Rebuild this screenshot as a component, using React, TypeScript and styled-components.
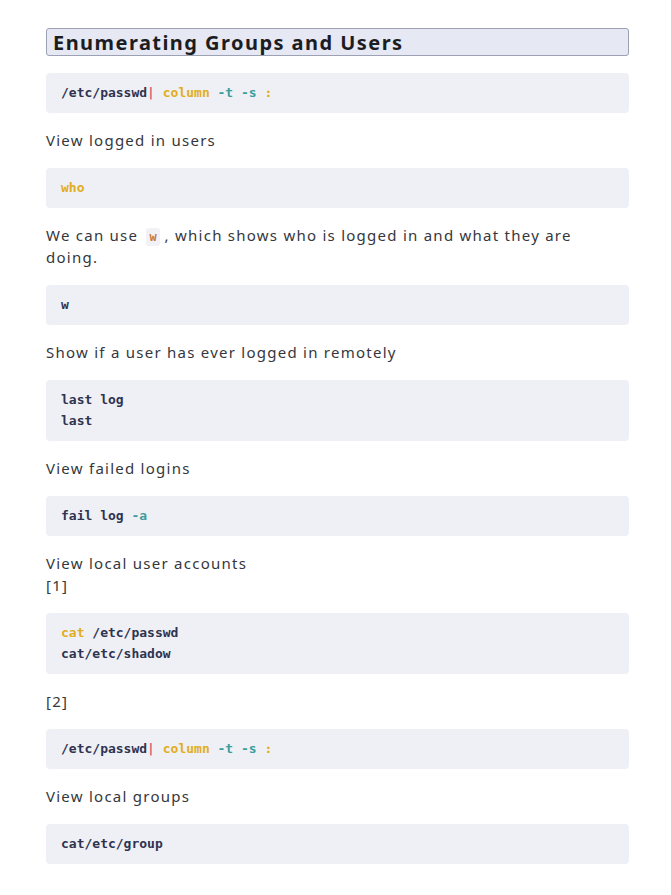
import React from "react";
import styled, { createGlobalStyle } from "styled-components";

const Global = createGlobalStyle`
  html, body { margin: 0; padding: 0; background: #ffffff; }
  body { font-family: "Noto Sans", "Open Sans", sans-serif; }
`;

const Page = styled.main`
  width: 583px;
  margin: 28px 0 0 46px;
  display: flex;
  flex-direction: column;
  gap: 16.5px;
`;

const Heading = styled.h2`
  margin: 0;
  height: 28px;
  box-sizing: border-box;
  padding: 0 6px;
  display: flex;
  align-items: center;
  background: #e6e8f3;
  border: 1px solid #9ca2b3;
  border-radius: 3px;
  font-family: "Noto Sans", sans-serif;
  font-weight: 700;
  font-size: 20px;
  letter-spacing: 1.45px;
  color: #1c1d22;
`;

const Para = styled.p`
  margin: 0;
  padding-right: 16px;
  font-size: 15px;
  line-height: 22px;
  letter-spacing: 1.25px;
  color: #35373d;
`;

const CodeBlock = styled.pre`
  margin: 0;
  padding: 9.5px 15px;
  background: #eff0f5;
  border-radius: 4px;
  font-family: "DejaVu Sans Mono", "Liberation Mono", monospace;
  font-weight: 700;
  font-size: 13px;
  line-height: 21px;
  color: #2e3350;
`;

type Tone = "plain" | "cmd" | "flag" | "pipe";
const toneColor: Record<Tone, string> = {
  plain: "#2e3350",
  cmd: "#e2ad22",
  flag: "#3b9e9b",
  pipe: "#e35b6f",
};

const Tok = styled.span<{ $tone: Tone }>`
  color: ${(p) => toneColor[p.$tone]};
`;

const InlineCode = styled.code`
  display: inline-block;
  font-family: "DejaVu Sans Mono", monospace;
  font-weight: 700;
  font-size: 12px;
  line-height: 18px;
  letter-spacing: 0;
  color: #c8783f;
  background: #f2f2f6;
  padding: 0 3px;
  margin: 0 5px 0 3px;
  border-radius: 3px;
`;

const ColumnLine = () => (
  <>
    /etc/passwd<Tok $tone="pipe">|</Tok> <Tok $tone="cmd">column</Tok>{" "}
    <Tok $tone="flag">-t</Tok> <Tok $tone="flag">-s</Tok> <Tok $tone="cmd">:</Tok>
  </>
);

export default function App() {
  return (
    <>
      <Global />
      <Page>
        <Heading>Enumerating Groups and Users</Heading>
        <CodeBlock>
          <ColumnLine />
        </CodeBlock>
        <Para>View logged in users</Para>
        <CodeBlock>
          <Tok $tone="cmd">who</Tok>
        </CodeBlock>
        <Para>
          We can use <InlineCode>w</InlineCode>, which shows who is logged in and what they are
          doing.
        </Para>
        <CodeBlock>w</CodeBlock>
        <Para>Show if a user has ever logged in remotely</Para>
        <CodeBlock>
          {"last log\nlast"}
        </CodeBlock>
        <Para>View failed logins</Para>
        <CodeBlock>
          fail log <Tok $tone="flag">-a</Tok>
        </CodeBlock>
        <Para>
          View local user accounts
          <br />
          [1]
        </Para>
        <CodeBlock>
          <Tok $tone="cmd">cat</Tok> /etc/passwd{"\n"}cat/etc/shadow
        </CodeBlock>
        <Para>[2]</Para>
        <CodeBlock>
          <ColumnLine />
        </CodeBlock>
        <Para>View local groups</Para>
        <CodeBlock>cat/etc/group</CodeBlock>
      </Page>
    </>
  );
}
